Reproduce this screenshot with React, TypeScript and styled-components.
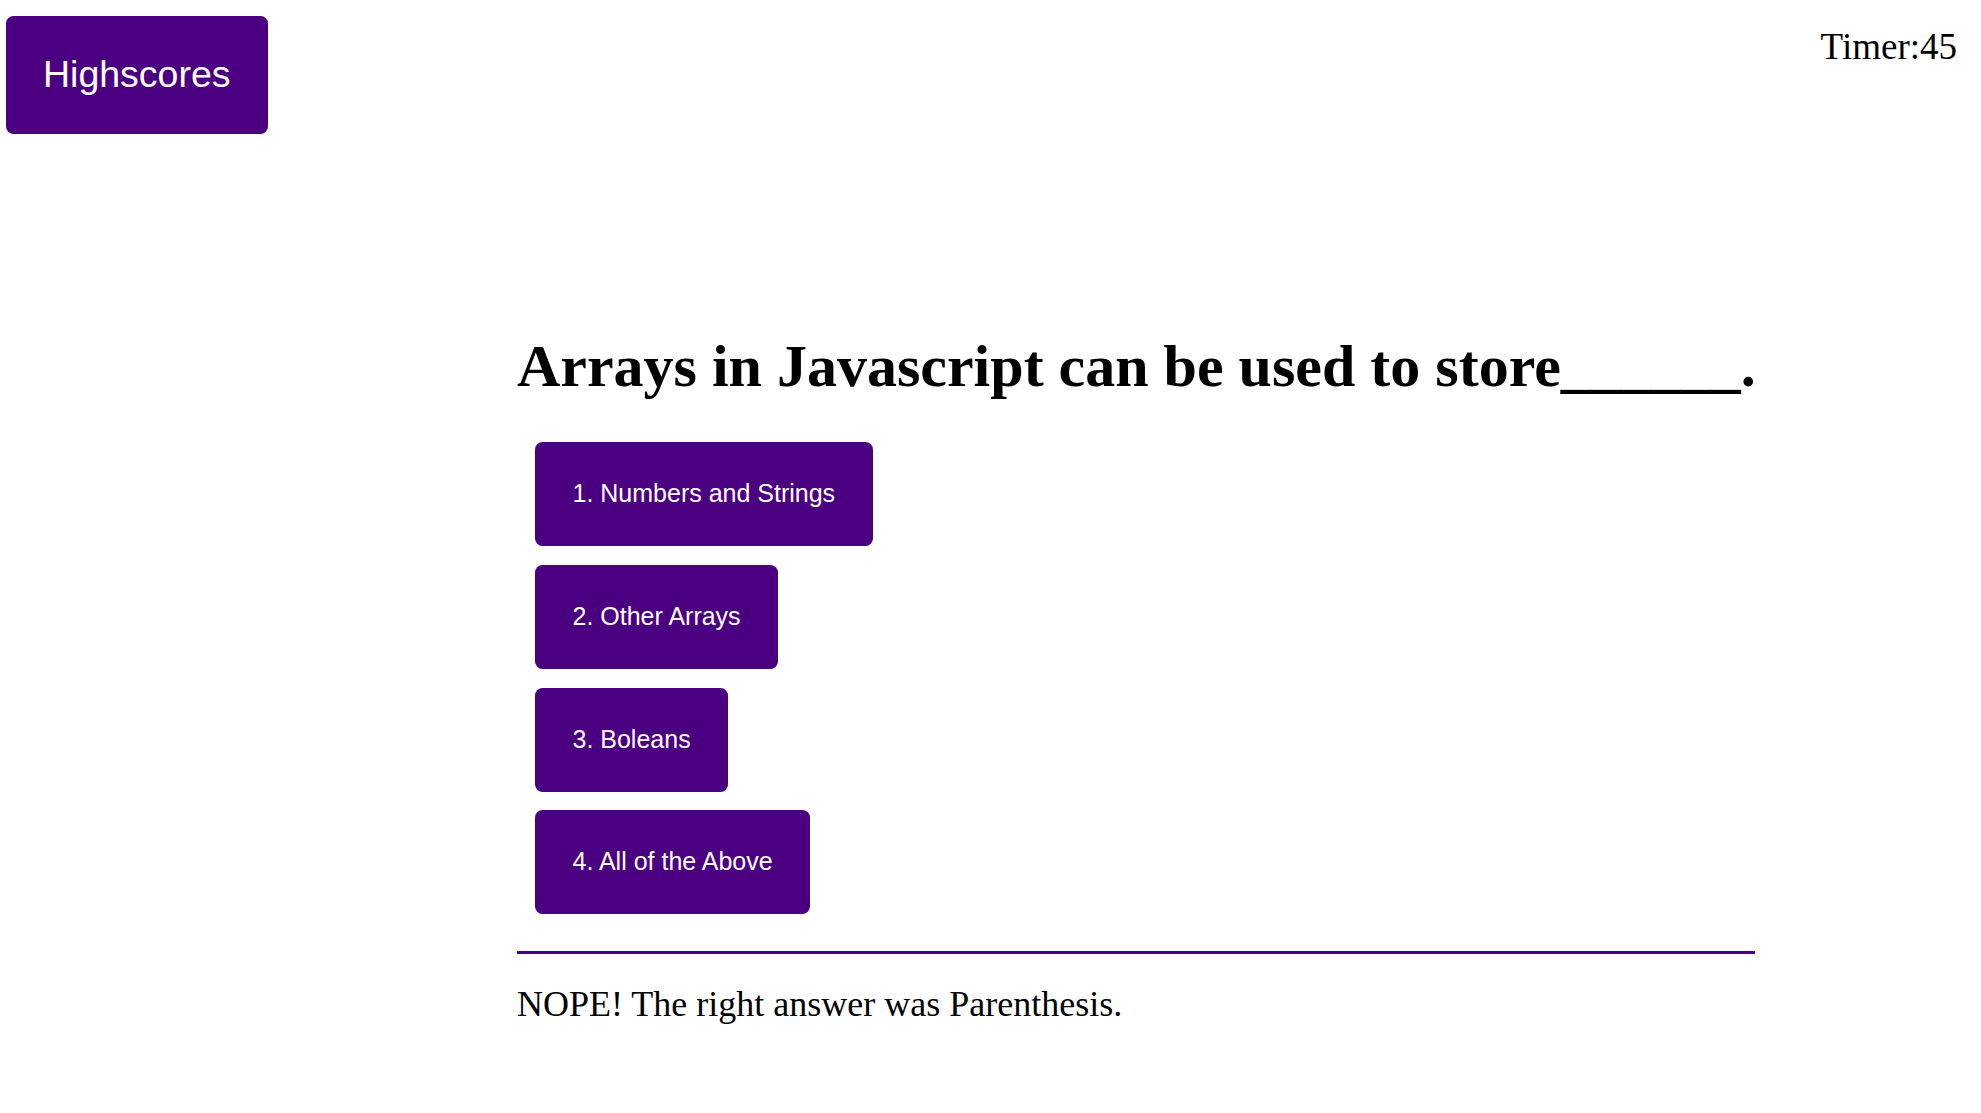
import React from "react";
import styled, { createGlobalStyle } from "styled-components";

const GlobalStyle = createGlobalStyle`
  html, body {
    margin: 0;
    padding: 0;
    background: #ffffff;
  }
  body {
    font-family: "Liberation Serif", "Times New Roman", serif;
    color: #000000;
  }
`;

const indigo = "#4b0082";

const Header = styled.header`
  display: flex;
  justify-content: space-between;
  align-items: flex-start;
`;

const HighscoresButton = styled.button`
  margin: 16px 0 0 6px;
  padding: 36.5px 37px 38.5px 37px;
  border: none;
  border-radius: 7.5px;
  background: ${indigo};
  color: #ffffff;
  font-family: "Liberation Sans", Arial, sans-serif;
  font-size: 37.5px;
  line-height: 43px;
  cursor: pointer;
`;

const Timer = styled.div`
  margin: 25px 24px 0 0;
  font-family: "Liberation Serif", "Times New Roman", serif;
  font-size: 37px;
  line-height: 43px;
`;

const Quiz = styled.main`
  margin: 198px 0 0 517px;
  width: 1238px;
  display: flex;
  flex-direction: column;
`;

const Question = styled.h1`
  margin: 0;
  font-family: "Liberation Serif", "Times New Roman", serif;
  font-weight: bold;
  font-size: 60px;
  line-height: 69px;
  white-space: nowrap;
`;

const Choices = styled.div`
  margin-top: 41px;
  padding-left: 18px;
  display: flex;
  flex-direction: column;
  align-items: flex-start;
  gap: 18.75px;
`;

const Choice = styled.button`
  padding: 37px 37.5px 38px 37.5px;
  border: none;
  border-radius: 7.5px;
  background: ${indigo};
  color: #ffffff;
  font-family: "Liberation Sans", Arial, sans-serif;
  font-size: 25px;
  line-height: 29px;
  cursor: pointer;
`;

const Divider = styled.hr`
  margin: 37px 0 0 0;
  height: 3px;
  border: none;
  background: ${indigo};
`;

const Result = styled.p`
  margin: 30px 0 0 0;
  font-family: "Liberation Serif", "Times New Roman", serif;
  font-size: 36px;
  line-height: 41px;
`;

const choices = [
  "1. Numbers and Strings",
  "2. Other Arrays",
  "3. Boleans",
  "4. All of the Above",
];

export default function App() {
  return (
    <>
      <GlobalStyle />
      <Header>
        <HighscoresButton>Highscores</HighscoresButton>
        <Timer>Timer:45</Timer>
      </Header>
      <Quiz>
        <Question>Arrays in Javascript can be used to store______.</Question>
        <Choices>
          {choices.map((c) => (
            <Choice key={c}>{c}</Choice>
          ))}
        </Choices>
        <Divider />
        <Result>NOPE! The right answer was Parenthesis.</Result>
      </Quiz>
    </>
  );
}
